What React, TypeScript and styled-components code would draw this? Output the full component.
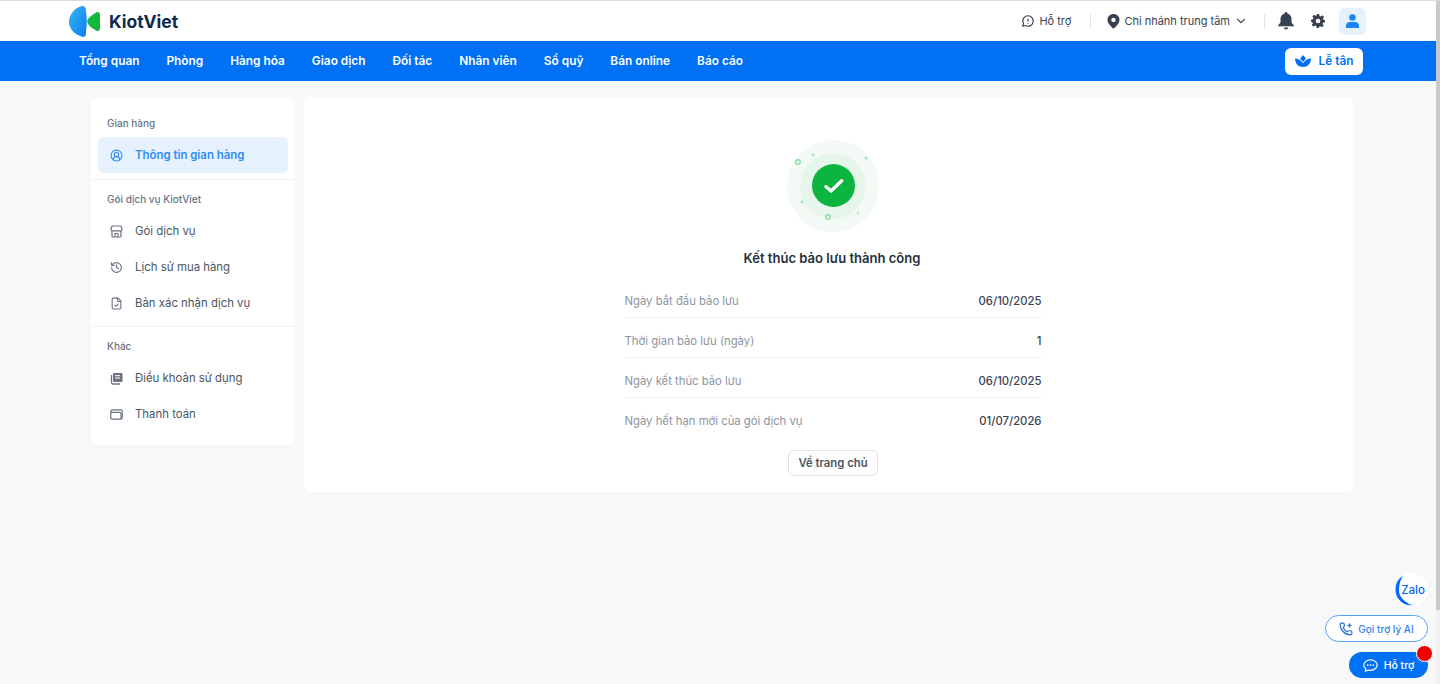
import React from 'react';
import styled, { createGlobalStyle } from 'styled-components';
import { ChevronDown, CircleUserRound, History, FileCheck } from 'lucide-react';

const Global = createGlobalStyle`
  html, body { margin: 0; padding: 0; height: 100%; overflow: hidden; background: #f6f8fa; }
  body { font-family: Inter, "Noto Sans", sans-serif; color: #1f2937; }
  #root { height: 100%; }
`;
const Page = styled.div`height: 684px; display: flex; flex-direction: column; border-top: 1px solid #dcdcdc; box-sizing: border-box; position: relative; overflow: hidden;`;
const Header = styled.header`height: 40px; background: #fff; display: flex; align-items: center; padding: 0 74px 0 69px; flex: none;`;
const Logo = styled.div`display: flex; align-items: center; gap: 8px;`;
const Brand = styled.span`font-size: 17.5px; font-weight: 700; color: #0f2a4d;`;
const HeaderRight = styled.div`margin-left: auto; display: flex; align-items: center;`;
const Tool = styled.div`display: flex; align-items: center; gap: 4px; font-size: 11px; color: #374151;`;
const VBar = styled.span<{ $l: number; $r: number }>`width: 1px; height: 15px; background: #dfe3e8; margin: 0 ${p => p.$r}px 0 ${p => p.$l}px;`;
const Gear = styled.svg`margin-left: 17px;`;
const Avatar = styled.div`width: 27px; height: 27px; border-radius: 6px; background: #e6f1fe; display: flex; align-items: center; justify-content: center; margin-left: 14px;`;
const Nav = styled.nav`height: 40px; background: #0070f4; display: flex; align-items: center; padding: 0 77px 0 79px; flex: none;`;
const NavList = styled.div`display: flex; gap: 27px; padding-bottom: 1px;`;
const NavItem = styled.a`font-size: 11.85px; font-weight: 600; color: #fff;`;
const Desk = styled.button`margin-left: auto; width: 78px; height: 27px; border: 0; border-radius: 6px; background: #fff; color: #0070f4; font: 600 11.8px Inter, sans-serif; display: flex; align-items: center; justify-content: center; gap: 8px; padding: 0;`;
const Body = styled.div`display: flex; align-items: flex-start; gap: 9px; padding: 16px 86px 0 91px;`;
const Side = styled.aside`width: 204px; height: 348px; background: #fff; border-radius: 8px; flex: none; box-sizing: border-box;`;
const Group = styled.div<{ $border?: boolean; $h: number; $pt: number }>`height: ${p => p.$h}px; box-sizing: border-box; padding: ${p => p.$pt}px 7px 0; border-bottom: ${p => p.$border ? '1px solid #f0f2f5' : 0};`;
const GroupTitle = styled.div`font-size: 10px; font-weight: 500; line-height: 13px; color: #6b7280; padding-left: 9px; margin-bottom: 7px;`;
const Item = styled.div<{ $active?: boolean }>`height: 36px; border-radius: 6px; display: flex; align-items: center; gap: 12px; padding-left: 12px; font-size: 11.4px; font-weight: ${p => p.$active ? 600 : 400}; color: ${p => p.$active ? '#2f8cf7' : '#4b5563'}; background: ${p => p.$active ? '#e6f1fe' : 'transparent'}; svg { flex: none; color: ${p => p.$active ? '#2f8cf7' : '#6b7280'}; }`;
const Main = styled.main`width: 1050px; height: 395px; background: #fff; border-radius: 8px; flex: none; display: flex; flex-direction: column; align-items: center; padding: 43px 0 0 8px; box-sizing: border-box;`;
const Title = styled.h2`margin: 17px 0 11px -2px; font-size: 13.05px; line-height: 18px; font-weight: 600; color: #27303d;`;
const Table = styled.div`width: 417px;`;
const Row = styled.div<{ $last?: boolean }>`height: 40px; padding-top: ${p => p.$last ? 5 : 6}px; display: flex; align-items: center; justify-content: space-between; box-sizing: border-box; border-bottom: ${p => p.$last ? 0 : '1px solid #edf0f3'}; font-size: 11.3px;`;
const Label = styled.span`color: #8b95a3;`;
const Value = styled.span`color: #3b4350; font-weight: 500;`;
const HomeBtn = styled.button`margin-top: 12px; width: 90px; height: 26px; border: 1px solid #dfe3e8; border-radius: 6px; background: #fff; font: 600 11.3px Inter, sans-serif; color: #4b5563; padding: 0;`;
const ScrollTrack = styled.div`position: absolute; right: 0; top: 0; bottom: 0; width: 4px; background: #f1f1f1;`;
const ScrollThumb = styled.div`height: 609px; background: #c9c9c9;`;
const Zalo = styled.div`position: absolute; right: 12px; top: 572px; width: 34px; height: 34px; border-radius: 50%; background: #fff; display: flex; align-items: center; justify-content: center; font-size: 11.5px; font-weight: 500; color: #0068ff; padding-left: 4px; box-sizing: border-box;`;
const ZaloArc = styled.svg`position: absolute; left: 0; top: 0;`;
const AiBtn = styled.div`position: absolute; right: 12px; top: 614px; width: 103px; height: 27px; border-radius: 14px; border: 1px solid #5aa2f7; background: #fff; box-sizing: border-box; display: flex; align-items: center; justify-content: center; gap: 5px; font-size: 10px; font-weight: 500; color: #2f80ed; svg { flex: none; }`;
const HelpBtn = styled.div`position: absolute; right: 12px; top: 651px; width: 79px; height: 26px; border-radius: 13px; background: #0070f4; display: flex; align-items: center; justify-content: center; gap: 6px; font-size: 10.5px; font-weight: 500; color: #fff;`;
const Red = styled.span`position: absolute; right: 7px; top: 644px; width: 15px; height: 15px; border-radius: 50%; background: #f00000; border: 1px solid #fff; box-sizing: content-box;`;

const nav = ['Tổng quan', 'Phòng', 'Hàng hóa', 'Giao dịch', 'Đối tác', 'Nhân viên', 'Sổ quỹ', 'Bán online', 'Báo cáo'];
const rows = [
  ['Ngày bắt đầu bảo lưu', '06/10/2025'],
  ['Thời gian bảo lưu (ngày)', '1'],
  ['Ngày kết thúc bảo lưu', '06/10/2025'],
  ['Ngày hết hạn mới của gói dịch vụ', '01/07/2026'],
];

const LogoMark = () => (
  <svg width="32" height="31" viewBox="0 0 32 31">
    <defs><linearGradient id="lb" x1="0" y1="0" x2="1" y2="1"><stop offset="0" stopColor="#39b6f4" /><stop offset="1" stopColor="#0b7cf2" /></linearGradient></defs>
    <path d="M13 0C5 2 0 9 0 16c0 7 6 13 14 15 3 0 3-3 3-5 1-7 1-15 0-21 0-3-1-5-4-5z" fill="url(#lb)" />
    <path d="M28 6c-4 2-8 5-9.500 8-.5 1-.5 2 0 3 1.500 3 5.500 6 9.500 8 2 .5 3-1 3-3V9c0-2-1-3.500-3-3z" fill="#10b93c" />
  </svg>
);
const Lotus = () => (
  <svg width="16" height="12" viewBox="0 0 16 12" fill="#0070f4">
    <path d="M8 0l3 3.600L8 7 5 3.600z" />
    <path d="M0 3.500c3 0 6.200 1.800 8 4.800 1.800-3 5-4.800 8-4.800 0 5-3.500 8.500-8 8.500S0 8.500 0 3.500z" />
  </svg>
);
const Plus = ({ x, y, r }: { x: number; y: number; r: number }) => (
  <path d={`M${x - r} ${y}h${2 * r}M${x} ${y - r}v${2 * r}`} stroke="#a5e3b9" strokeWidth="1" />
);
const SuccessBadge = () => (
  <svg width="92" height="92" viewBox="0 0 92 92">
    <circle cx="46" cy="46" r="46" fill="#f3faf5" />
    <circle cx="46" cy="46" r="33" fill="#e7f6eb" />
    <circle cx="46.500" cy="45.500" r="21.500" fill="#0bb53f" />
    <path d="M39 46.700l5 4.300 10.700-10.300" fill="none" stroke="#fff" strokeWidth="3.400" strokeLinecap="round" strokeLinejoin="round" />
    <circle cx="11" cy="22" r="2.300" fill="none" stroke="#8edba6" strokeWidth="1.400" />
    <circle cx="41" cy="77" r="2.300" fill="none" stroke="#8edba6" strokeWidth="1.400" />
    <Plus x={26} y={15} r={1.800} />
    <Plus x={79} y={18} r={2} />
    <Plus x={15} y={62} r={2} />
    <Plus x={71} y={73} r={1.500} />
  </svg>
);
const StoreIcon = () => (
  <svg width="13" height="13" viewBox="0 0 13 13" fill="none" stroke="currentColor" strokeWidth="1.200" strokeLinejoin="round">
    <path d="M2 1h9l1 3.500a1.500 1.500 0 0 1-1 1.300H2A1.500 1.500 0 0 1 1 4.500z" />
    <path d="M2 6v5a1 1 0 0 0 1 1h7a1 1 0 0 0 1-1V6" />
    <path d="M5 12V8.500h3V12" />
  </svg>
);
const TermsIcon = () => (
  <svg width="13" height="13" viewBox="0 0 13 13" fill="currentColor">
    <path d="M4 1h7.500a1 1 0 0 1 1 1v7a1 1 0 0 1-1 1H4a1 1 0 0 1-1-1V2a1 1 0 0 1 1-1z" />
    <path d="M1.500 3v7.500A1.500 1.500 0 0 0 3 12h7" fill="none" stroke="currentColor" strokeWidth="1.300" />
    <path d="M5 3.700h5M5 6h5" stroke="#fff" strokeWidth="1" />
  </svg>
);
const WalletIcon = () => (
  <svg width="13" height="13" viewBox="0 0 13 13" fill="none" stroke="currentColor" strokeWidth="1.200" strokeLinejoin="round">
    <rect x=".8" y="1.800" width="11.400" height="9.400" rx="1.500" />
    <path d="M.8 4.300h8.700a1.500 1.500 0 0 1 1.500 1.500v5.400" />
  </svg>
);
const AiPhone = () => (
  <svg width="14" height="14" viewBox="0 0 24 24" fill="none" stroke="#1f6fe0" strokeWidth="2" strokeLinecap="round" strokeLinejoin="round">
    <path d="M13.832 16.568a1 1 0 0 0 1.213-.303l.355-.465A2 2 0 0 1 17 15h3a2 2 0 0 1 2 2v3a2 2 0 0 1-2 2A18 18 0 0 1 2 4a2 2 0 0 1 2-2h3a2 2 0 0 1 2 2v3a2 2 0 0 1-.8 1.600l-.468.351a1 1 0 0 0-.292 1.233 14 14 0 0 0 6.392 6.384" />
    <path d="M18 1l1.200 3.800L23 6l-3.800 1.200L18 11l-1.200-3.800L13 6l3.800-1.200z" fill="#1f6fe0" stroke="none" />
  </svg>
);
const ChatIcon = () => (
  <svg width="15" height="13" viewBox="0 0 15 13" fill="none" stroke="#fff" strokeWidth="1.200">
    <path d="M7.500.8c3.700 0 6.700 2.400 6.700 5.300s-3 5.300-6.700 5.300c-.8 0-1.600-.1-2.300-.3L2.300 12.200l.5-2.400C1.500 8.800.8 7.500.8 6.100.8 3.200 3.800.8 7.500.8z" strokeLinejoin="round" />
    <circle cx="4.700" cy="6.100" r=".9" fill="#fff" stroke="none" />
    <circle cx="7.500" cy="6.100" r=".9" fill="#fff" stroke="none" />
    <circle cx="10.300" cy="6.100" r=".9" fill="#fff" stroke="none" />
  </svg>
);

export default function App() {
  return (
    <Page>
      <Global />
      <Header>
        <Logo><LogoMark /><Brand>KiotViet</Brand></Logo>
        <HeaderRight>
          <Tool>
            <svg width="14" height="14" viewBox="0 0 24 24" fill="none" stroke="#374151" strokeWidth="2"><path d="M12 3a9 9 0 1 1-4.500 16.800L3 21l1.200-4.500A9 9 0 0 1 12 3z" /><path d="M12 8v5M12 15.500v1" /></svg>
            Hỗ trợ
          </Tool>
          <VBar $l={19} $r={16} />
          <Tool>
            <svg width="13" height="15" viewBox="0 0 13 15"><path fillRule="evenodd" clipRule="evenodd" fill="#374151" d="M6.500 0C3 0 .5 2.700.5 5.800c0 3.600 3.600 6.900 6 9 2.400-2.100 6-5.400 6-9C12.500 2.700 10 0 6.500 0zm0 3.700a2.200 2.200 0 1 1 0 4.400 2.200 2.200 0 0 1 0-4.400z" /></svg>
            Chi nhánh trung tâm
            <ChevronDown size={14} color="#4b5563" />
          </Tool>
          <VBar $l={16} $r={13} />
          <svg width="16" height="18" viewBox="0 0 16 18" fill="#374151"><path d="M8 0a1.300 1.300 0 0 1 1.300 1.500C12 2.100 13.500 4.400 13.500 7v3.500L16 13.500v.8H0v-.8l2.500-3V7c0-2.600 1.500-4.900 4.200-5.500A1.300 1.300 0 0 1 8 0z" /><path d="M5.800 15.400h4.400A2.200 2.200 0 0 1 8 17.500a2.200 2.200 0 0 1-2.200-2.100z" /></svg>
          <Gear width="14" height="14" viewBox="0 0 24 24" fill="#374151"><path fillRule="evenodd" clipRule="evenodd" d="M10 0h4l.7 3.300 2.100.9L19.600 2.300l2.800 2.800-1.900 2.800.9 2.100L24 10.700v3.600l-3.300.7-.9 2.100 1.900 2.800-2.800 2.800-2.800-1.900-2.100.9L13.300 24h-3.600l-.7-3.300-2.100-.9-2.800 1.900-2.800-2.800 1.900-2.800-.9-2.100L0 13.300v-3.600l3.300-.7.9-2.100-1.900-2.800 2.800-2.800 2.800 1.900 2.100-.9zM12 8a4 4 0 1 0 0 8 4 4 0 0 0 0-8z" /></Gear>
          <Avatar>
            <svg width="13" height="14" viewBox="0 0 14 15" fill="#1b86f5"><circle cx="7" cy="3.700" r="3.500" /><path d="M0 15v-2.500C0 10 2 8.500 4 8.500h6c2 0 4 1.500 4 4V15z" /></svg>
          </Avatar>
        </HeaderRight>
      </Header>
      <Nav>
        <NavList>{nav.map(n => <NavItem key={n}>{n}</NavItem>)}</NavList>
        <Desk><Lotus />Lễ tân</Desk>
      </Nav>
      <Body>
        <Side>
          <Group $h={83} $pt={20} $border>
            <GroupTitle>Gian hàng</GroupTitle>
            <Item $active><CircleUserRound size={13} />Thông tin gian hàng</Item>
          </Group>
          <Group $h={147} $pt={13} $border>
            <GroupTitle>Gói dịch vụ KiotViet</GroupTitle>
            <Item><StoreIcon />Gói dịch vụ</Item>
            <Item><History size={13} />Lịch sử mua hàng</Item>
            <Item><FileCheck size={13} />Bản xác nhận dịch vụ</Item>
          </Group>
          <Group $h={118} $pt={13}>
            <GroupTitle>Khác</GroupTitle>
            <Item><TermsIcon />Điều khoản sử dụng</Item>
            <Item><WalletIcon />Thanh toán</Item>
          </Group>
        </Side>
        <Main>
          <SuccessBadge />
          <Title>Kết thúc bảo lưu thành công</Title>
          <Table>
            {rows.map((r, i) => (
              <Row key={r[0]} $last={i === rows.length - 1}>
                <Label>{r[0]}</Label>
                <Value>{r[1]}</Value>
              </Row>
            ))}
          </Table>
          <HomeBtn>Về trang chủ</HomeBtn>
        </Main>
      </Body>
      <ScrollTrack><ScrollThumb /></ScrollTrack>
      <Zalo>
        <ZaloArc width="34" height="34" viewBox="0 0 34 34" fill="none">
          <path d="M9 3C3.500 6 1.500 11 1.500 17c0 8 6.500 15 15 15.300 1 0 2 0 3-.3-3 0-5-1-6.500-2.500C7.500 26 5 22 5 17c0-5 1-10 4-14z" fill="#0068ff" />
        </ZaloArc>
        Zalo
      </Zalo>
      <AiBtn><AiPhone />Gọi trợ lý AI</AiBtn>
      <HelpBtn><ChatIcon />Hỗ trợ</HelpBtn>
      <Red />
    </Page>
  );
}
